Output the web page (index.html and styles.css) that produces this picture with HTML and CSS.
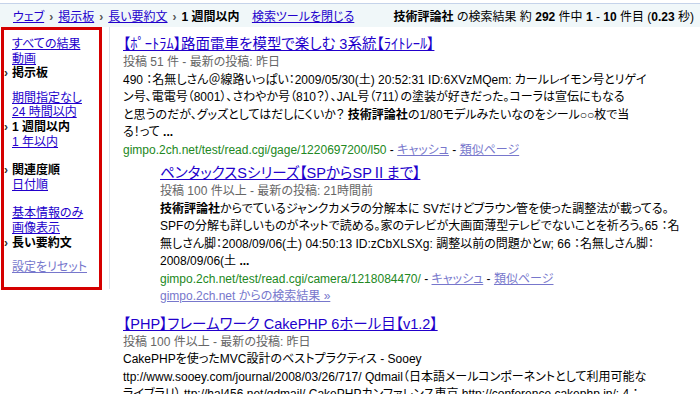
FILE: index.html
```html
<!DOCTYPE html>
<html lang="ja">
  <head>
    <meta charset="utf-8" />
    <meta name="viewport" content="width=device-width, initial-scale=1.0" />
    <link rel="stylesheet" href="styles.css">
  </head>
  <body>
    <div class="topbar">
      <div class="crumbs">
        <a href="#">ウェブ</a><span class="sep">›</span><a href="#">掲示板</a><span class="sep">›</span><a href="#">長い要約文</a><span class="sep">›</span><b>1 週間以内</b>
        <a href="#" class="close-tools">検索ツールを閉じる</a>
      </div>
      <div class="stats">
        <b>技術評論社</b> の検索結果 約 <b>292</b> 件中 <b>1</b> - <b>10</b> 件目 (<b>0.23</b> 秒)
      </div>
    </div>

    <div class="page">
      <div class="leftcol">
        <div class="tools">
          <ul class="group">
            <li><a href="#">すべての結果</a></li>
            <li><a href="#">動画</a></li>
            <li class="on">掲示板</li>
          </ul>
          <ul class="group">
            <li><a href="#">期間指定なし</a></li>
            <li><a href="#">24 時間以内</a></li>
            <li class="on">1 週間以内</li>
            <li><a href="#">1 年以内</a></li>
          </ul>
          <ul class="group sort">
            <li class="on">関連度順</li>
            <li><a href="#">日付順</a></li>
          </ul>
          <ul class="group view">
            <li><a href="#">基本情報のみ</a></li>
            <li><a href="#">画像表示</a></li>
            <li class="on">長い要約文</li>
          </ul>
          <ul class="group">
            <li><a href="#" class="reset">設定をリセット</a></li>
          </ul>
        </div>
      </div>

      <div class="results">
        <div class="result">
          <h3><a href="#">【ﾎﾟｰﾄﾗﾑ】路面電車を模型で楽しむ 3系統【ﾗｲﾄﾚｰﾙ】</a></h3>
          <div class="meta">投稿 51 件 - 最新の投稿: 昨日</div>
          <div class="snippet">
            490 ：名無しさん＠線路いっぱい：2009/05/30(土) 20:52:31 ID:6XVzMQem: カールレイモン号とリゲイ<br>
            ン号、電電号（8001）、さわやか号（810？）、JAL号（711）の塗装が好きだった。コーラは宣伝にもなる<br>
            と思うのだが、グッズとしてはだしにくいか？ <b>技術評論社</b>の1/80モデルみたいなのをシール○○枚で当<br>
            る！って <b>...</b>
          </div>
          <div class="url">
            <cite>gimpo.2ch.net/test/read.cgi/gage/1220697200/l50</cite> - <a href="#">キャッシュ</a> - <a href="#">類似ページ</a>
          </div>
        </div>

        <div class="result indent">
          <h3><a href="#">ペンタックスSシリーズ【SPからSPⅡまで】</a></h3>
          <div class="meta">投稿 100 件以上 - 最新の投稿: 21時間前</div>
          <div class="snippet">
            <b>技術評論社</b>からでているジャンクカメラの分解本に SVだけどブラウン管を使った調整法が載ってる。<br>
            SPFの分解も詳しいものがネットで読める。家のテレビが大画面薄型テレビでないことを祈ろう。65 ：名<br>
            無しさん脚：2008/09/06(土) 04:50:13 ID:zCbXLSXg: 調整以前の問題かとw; 66 ：名無しさん脚：<br>
            2008/09/06(土 <b>...</b>
          </div>
          <div class="url">
            <cite>gimpo.2ch.net/test/read.cgi/camera/1218084470/</cite> - <a href="#">キャッシュ</a> - <a href="#">類似ページ</a>
          </div>
          <div class="more"><a href="#">gimpo.2ch.net からの検索結果 »</a></div>
        </div>

        <div class="result">
          <h3><a href="#">【PHP】フレームワーク CakePHP 6ホール目【v1.2】</a></h3>
          <div class="meta">投稿 100 件以上 - 最新の投稿: 昨日</div>
          <div class="snippet">
            CakePHPを使ったMVC設計のベストプラクティス - Sooey<br>
            ttp://www.sooey.com/journal/2008/03/26/717/ Qdmail（日本語メールコンポーネントとして利用可能な<br>
            ライブラリ） ttp://hal456.net/qdmail/ CakePHPカンファレンス東京 http://conference.cakephp.jp/: 4 ：
          </div>
        </div>
      </div>
    </div>
  </body>
</html>
```

FILE: styles.css
```css
body {
  margin: 0;
  font-family: "Liberation Sans", "Noto Sans CJK JP", sans-serif;
  font-size: 12px;
  font-feature-settings: "palt";
  color: #000;
  overflow: hidden;
}
a {
  color: #2200cc;
}
ul {
  list-style: none;
  margin: 0;
  padding: 0;
}
.topbar {
  margin-top: 3px;
  border-top: 1px solid #c5d3ea;
  background-color: #f0f7f9;
  height: 23px;
  padding: 0 6px 0 13px;
  display: flex;
  align-items: center;
  justify-content: space-between;
}
.sep {
  color: #555;
  font-weight: bold;
  margin: 0 5px;
}
.close-tools {
  margin-left: 9px;
}
.page {
  display: flex;
  align-items: flex-start;
}
.leftcol {
  width: 108px;
  height: 262px;
  padding-left: 1px;
  border-right: 1px solid #dce2ec;
}
.tools {
  width: 101px;
  height: 263px;
  box-sizing: border-box;
  border: 3px solid #d50000;
  padding: 7px 0 0 8px;
  line-height: 14.6px;
}
.group + .group {
  margin-top: 10px;
}
.group.sort {
  margin-top: 14px;
}
.group.view {
  margin-top: 14px;
}
.tools li {
  position: relative;
  white-space: nowrap;
}
.tools li.on {
  font-weight: bold;
}
.tools li.on::before {
  content: "›";
  position: absolute;
  left: -8px;
  color: #333;
}
.tools .reset {
  color: #7777cc;
}
.results {
  padding: 8px 0 0 13px;
}
.result {
  margin-bottom: 5px;
  white-space: nowrap;
}
.result.indent {
  margin-left: 37px;
}
.result h3 {
  margin: 0;
  font-size: 14.5px;
  font-weight: normal;
  line-height: 19px;
}
.meta {
  color: #666;
  line-height: 17.5px;
}
.snippet,
.url,
.more {
  line-height: 17.5px;
}
.url cite {
  font-style: normal;
  color: #228822;
}
.url a,
.more a {
  color: #7777cc;
}
.more {
  margin-bottom: 9px;
}
```
